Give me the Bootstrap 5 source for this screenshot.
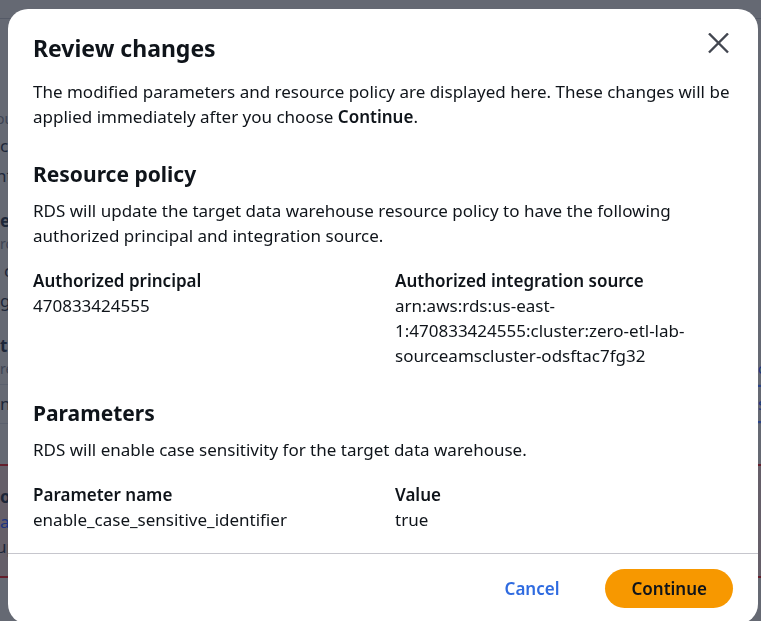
<!DOCTYPE html>
<html lang="en">
<head>
<meta charset="utf-8">
<meta name="viewport" content="width=device-width, initial-scale=1">
<title>Review changes</title>
<link href="https://cdn.jsdelivr.net/npm/bootstrap@5.3.0/dist/css/bootstrap.min.css" rel="stylesheet">
<style>
body { font-family: "Noto Sans", "Open Sans", sans-serif; font-size: 17px; line-height: 25px; color: #0f141a; background: #656973; overflow: hidden; }
.page-behind { color: #1d2739; height: 100vh; overflow: hidden; line-height: 30px; }
.page-top { height: 19px; border-bottom: 1px solid #555a67; }
.page-intro { margin-top: 90px; }
.page-field { margin-top: 15px; }
.hint { font-size: 14px; line-height: 16px; color: #3d4453; }
.intro-hint { line-height: 20px; margin-bottom: 2px; }
.bleed { margin-left: -4px; }
.line-link { color: #1d3580; }
.edge-link { width: 3px; }
.field-box { margin-top: 7px; height: 40px; border-top: 1px solid #5a606d; border-bottom: 1px solid #5a606d; line-height: 38px; }
.box-action { border-top: 2px solid #2b4488; border-bottom: 2px solid #2b4488; line-height: 34px; }
.page-error { margin-top: 40px; padding: 18px 0 17px; border-top: 2px solid #64202d; border-bottom: 2px solid #64202d; background: #655f69; line-height: 25px; }
.review-modal .modal-dialog { max-width: none; margin: 9px 3px 0 8px; }
.review-modal .modal-content { border: 0; border-radius: 20px; color: #0f141a; }
.review-modal .modal-header { border: 0; padding: 24px 25px 16px; }
.review-modal .modal-body { padding: 0 25px 21px; }
.review-modal .modal-footer { border-top: 1px solid #c6c6cd; padding: 15px 25px 16px; gap: 20px; }
.review-modal .modal-footer > * { margin: 0; }
h1.modal-title { font-size: 23px; font-weight: 700; line-height: 30px; }
h2 { font-size: 21px; font-weight: 700; line-height: 30px; margin: 30px 0 9px; }
dt, strong { font-weight: 650; }
.details { margin: 20px 0 0; }
.details dt, .details dd { margin: 0; }
.details dt { font-weight: 650; }
.close-btn { margin-right: 3px; width: 24px; height: 24px; line-height: 0; color: #424650; }
.pill { height: 39px; border-radius: 20px; font-size: 17px; font-weight: 650; line-height: 25px; padding: 6px 26px; }
.pill-link { color: #2f6be0; }
.pill-primary, .pill-primary:hover { background: #f79800; color: #0f141a; }
</style>
<script src="https://cdn.jsdelivr.net/npm/bootstrap@5.3.0/dist/js/bootstrap.bundle.min.js"></script>
</head>
<body>
<div class="page-behind" aria-hidden="true">
  <div class="page-top"></div>
  <div class="page-intro">
    <div class="hint intro-hint bleed">ou</div>
    <div>c</div>
    <div class="bleed">nt</div>
  </div>
  <div class="page-field">
    <div class="fw-bold">e</div>
    <div class="hint">ro</div>
    <div class="pt-1 ps-1">c</div>
    <div>g</div>
  </div>
  <div class="page-field">
    <div class="fw-bold">ta</div>
    <div class="hint d-flex justify-content-between"><span>re</span><span class="line-link edge-link">c</span></div>
    <div class="field-box d-flex justify-content-between"><span>n</span><span class="box-action line-link edge-link">s</span></div>
  </div>
  <div class="page-error">
    <div class="fw-bold">o</div>
    <div class="line-link">a</div>
    <div class="bleed">up</div>
  </div>
</div>

<div class="modal d-block overflow-hidden review-modal" role="dialog" aria-modal="true" aria-labelledby="reviewTitle">
  <div class="modal-dialog">
    <div class="modal-content">
      <div class="modal-header align-items-start justify-content-between">
        <h1 class="modal-title" id="reviewTitle">Review changes</h1>
        <button type="button" class="btn p-0 border-0 close-btn" aria-label="Close">
          <svg width="24" height="24" viewBox="0 0 24 24" fill="none" stroke="currentColor" stroke-width="2.4" aria-hidden="true"><path d="M3 .5L22 19.500M22 .5L3 19.500"/></svg>
        </button>
      </div>
      <div class="modal-body">
        <p class="mb-0">The modified parameters and resource policy are displayed here. These changes will be applied immediately after you choose <strong>Continue</strong>.</p>

        <h2>Resource policy</h2>
        <p class="mb-0">RDS will update the target data warehouse resource policy to have the following authorized principal and integration source.</p>
        <div class="row gx-4">
          <dl class="col-6 details"><dt>Authorized principal</dt><dd>470833424555</dd></dl>
          <dl class="col-6 details"><dt>Authorized integration source</dt><dd>arn:aws:rds:us-east-<wbr>1:470833424555:cluster:zero-etl-lab-<wbr>sourceamscluster-odsftac7fg32</dd></dl>
        </div>

        <h2>Parameters</h2>
        <p class="mb-0">RDS will enable case sensitivity for the target data warehouse.</p>
        <div class="row gx-4">
          <dl class="col-6 details"><dt>Parameter name</dt><dd>enable_case_sensitive_identifier</dd></dl>
          <dl class="col-6 details"><dt>Value</dt><dd>true</dd></dl>
        </div>
      </div>
      <div class="modal-footer">
        <button type="button" class="btn border-0 pill pill-link">Cancel</button>
        <button type="button" class="btn border-0 pill pill-primary">Continue</button>
      </div>
    </div>
  </div>
</div>
</body>
</html>
